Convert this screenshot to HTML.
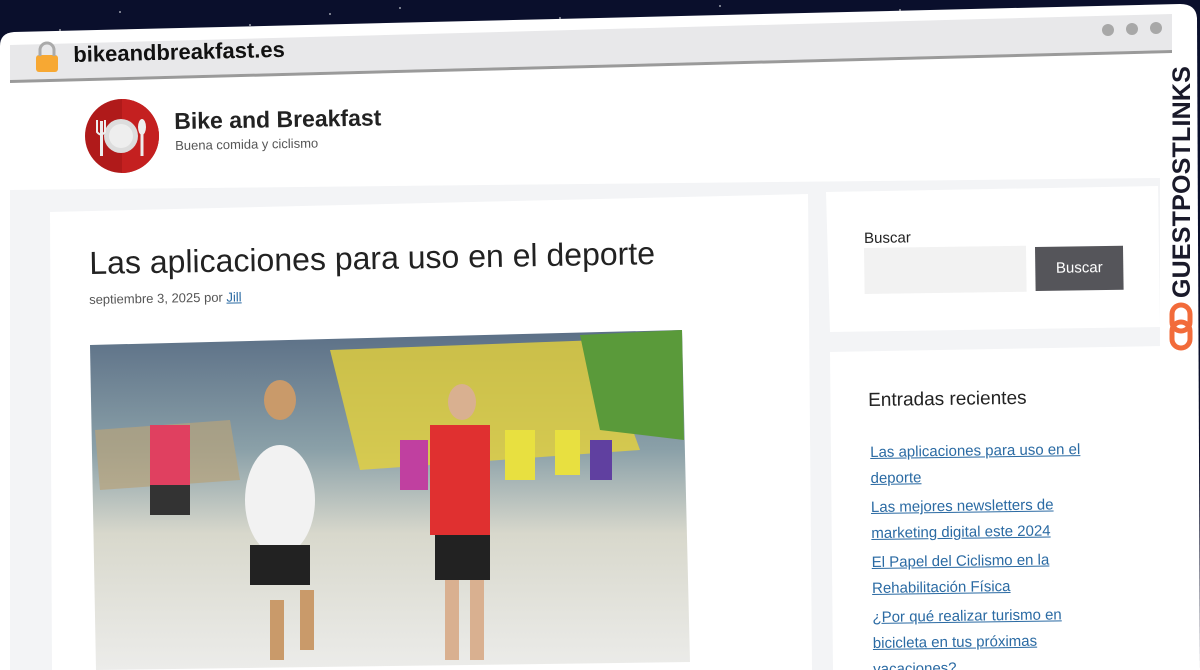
<!DOCTYPE html>
<html><head><meta charset="utf-8"><style>
html,body{margin:0;width:1200px;height:670px;overflow:hidden}
body{background:#0a0f2c;font-family:"Liberation Sans",sans-serif;position:relative}
.a{position:absolute;white-space:nowrap;transform-origin:0 0}
a{color:#2a6aa3;text-decoration:underline}
</style></head><body>
<svg class="a" style="left:0;top:0" width="1200" height="670">
<g fill="#fff" opacity=".6"><circle cx="120" cy="12" r="1"/><circle cx="250" cy="25" r="1"/><circle cx="400" cy="8" r="1"/><circle cx="560" cy="18" r="1"/><circle cx="720" cy="6" r="1"/><circle cx="900" cy="10" r="1"/><circle cx="60" cy="30" r="1"/><circle cx="330" cy="14" r="1"/></g>
<path d="M14 32 L1180 4 Q1196 4 1197 18 L1200 670 L0 670 L0 46 Q0 33 14 32Z" fill="#fff"/>
<polygon points="10,45 1172,14 1172,50 10,80" fill="#e8e8ea"/>
<polygon points="10,80 1172,50 1172,53 10,83" fill="#9a9a9a"/>
<polygon points="10,190 1160,178 1160,670 10,670" fill="#f3f4f6"/>
<polygon points="50,212 808,194 812,670 52,670" fill="#fff"/>
<polygon points="826,192 1158,186 1160,327 830,332" fill="#fff"/>
<polygon points="830,352 1162,346 1165,670 833,670" fill="#fff"/>
<circle cx="1108" cy="30" r="6" fill="#a8a8a8"/><circle cx="1132" cy="29" r="6" fill="#a8a8a8"/><circle cx="1156" cy="28" r="6" fill="#a8a8a8"/>
<rect x="36" y="55" width="22" height="17" rx="3" fill="#f7a833"/>
<path d="M40 56 V50 a7 7 0 0 1 14 0 V56" fill="none" stroke="#aaa" stroke-width="3"/>
<circle cx="122" cy="136" r="37" fill="#b01a1a"/>
<path d="M122 99 a37 37 0 0 1 0 74Z" fill="#c42020"/>
<circle cx="121" cy="136" r="17" fill="#ddd"/><circle cx="121" cy="136" r="12" fill="#eee"/>
<rect x="100" y="121" width="3" height="35" fill="#eee"/><path d="M97 120 v12 q4 5 8 0 v-12" fill="none" stroke="#eee" stroke-width="2"/>
<ellipse cx="142" cy="127" rx="4" ry="8" fill="#eee"/><rect x="140.5" y="132" width="3" height="24" fill="#eee"/>
<defs><linearGradient id="g" x1="0" y1="0" x2="0" y2="1"><stop offset="0" stop-color="#5b6f86"/><stop offset=".35" stop-color="#8aa0a8"/><stop offset=".6" stop-color="#d8d8cc"/><stop offset="1" stop-color="#ececea"/></linearGradient></defs>
<polygon points="90,345 682,330 690,662 96,670" fill="url(#g)"/>
<polygon points="330,350 600,340 640,450 360,470" fill="#e6d23a" opacity=".8"/>
<polygon points="580,335 682,330 684,440 600,430" fill="#5a9a3a"/>
<polygon points="95,430 230,420 240,480 100,490" fill="#b7a27a" opacity=".7"/>
<ellipse cx="280" cy="500" rx="35" ry="55" fill="#f2f2f2"/><ellipse cx="280" cy="400" rx="16" ry="20" fill="#c99a6a"/>
<rect x="430" y="425" width="60" height="110" fill="#e03030"/><ellipse cx="462" cy="402" rx="14" ry="18" fill="#d9b090"/>
<rect x="250" y="545" width="60" height="40" fill="#222"/><rect x="435" y="535" width="55" height="45" fill="#222"/>
<rect x="150" y="425" width="40" height="60" fill="#e04060"/><rect x="150" y="485" width="40" height="30" fill="#333"/>
<rect x="505" y="430" width="30" height="50" fill="#e8e040"/><rect x="555" y="430" width="25" height="45" fill="#e8e040"/>
<rect x="400" y="440" width="28" height="50" fill="#c040a0"/><rect x="590" y="440" width="22" height="40" fill="#6040a0"/>
<rect x="270" y="600" width="14" height="60" fill="#c99a6a"/><rect x="300" y="590" width="14" height="60" fill="#c99a6a"/>
<rect x="445" y="580" width="14" height="80" fill="#d9b090"/><rect x="470" y="580" width="14" height="80" fill="#d9b090"/>
<g fill="none" stroke="#f26b3a" stroke-width="5"><rect x="1172" y="305" width="18" height="26" rx="9"/><rect x="1172" y="322" width="18" height="26" rx="9"/></g>
</svg>
<div class="a" style="left:73px;top:42px;font-size:22px;font-weight:bold;color:#111;transform:rotate(-1.4deg)">bikeandbreakfast.es</div>
<div class="a" style="left:174px;top:108px;font-size:23px;font-weight:bold;color:#222;transform:rotate(-1deg)">Bike and Breakfast</div>
<div class="a" style="left:175px;top:138px;font-size:13px;color:#555;transform:rotate(-1deg)">Buena comida y ciclismo</div>
<div class="a" style="left:89px;top:245px;font-size:32px;color:#222;transform:rotate(-1deg)">Las aplicaciones para uso en el deporte</div>
<div class="a" style="left:89px;top:292px;font-size:13px;color:#555;transform:rotate(-1deg)">septiembre 3, 2025 por <a>Jill</a></div>
<div class="a" style="left:864px;top:230px;font-size:15px;color:#222;transform:rotate(-0.8deg)">Buscar</div>
<div class="a" style="left:864px;top:248px;width:162px;height:46px;background:#f2f2f2;transform:rotate(-0.8deg)"></div>
<div class="a" style="left:1035px;top:247px;width:88px;height:44px;background:#55555a;color:#fff;font-size:15px;line-height:44px;text-align:center;transform:rotate(-0.8deg)">Buscar</div>
<div class="a" style="left:868px;top:390px;font-size:19px;color:#222;transform:rotate(-0.8deg)">Entradas recientes</div>
<div class="a" style="left:870px;top:440px;font-size:15px;line-height:26px;white-space:normal;width:240px;transform:rotate(-0.8deg)">
<div style="margin-bottom:3px"><a>Las aplicaciones para uso en el deporte</a></div>
<div style="margin-bottom:3px"><a>Las mejores newsletters de marketing digital este 2024</a></div>
<div style="margin-bottom:3px"><a>El Papel del Ciclismo en la Rehabilitación Física</a></div>
<div><a>¿Por qué realizar turismo en bicicleta en tus próximas vacaciones?.</a></div></div>
<div class="a" style="left:1168px;top:298px;font-size:25px;font-weight:bold;color:#1a1a2a;letter-spacing:0.2px;transform:rotate(-90deg)">GUESTPOSTLINKS</div>
</body></html>
